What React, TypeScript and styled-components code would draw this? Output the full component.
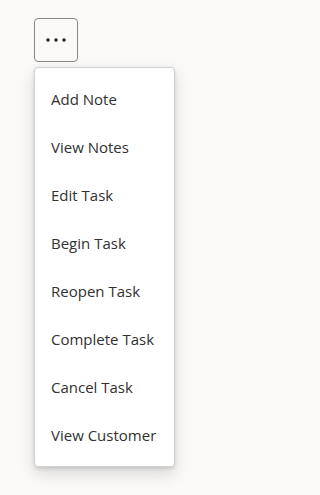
import styled, { createGlobalStyle } from 'styled-components';

const items = [
  'Add Note',
  'View Notes',
  'Edit Task',
  'Begin Task',
  'Reopen Task',
  'Complete Task',
  'Cancel Task',
  'View Customer',
];

const GlobalStyle = createGlobalStyle`
  html, body {
    margin: 0;
    background: #faf9f8;
  }
  body {
    font-family: "Open Sans", "Noto Sans", sans-serif;
    color: #323130;
  }
`;

function MoreIcon() {
  return (
    <svg width="20" height="6" viewBox="0 0 20 6" aria-hidden="true">
      <circle cx="2" cy="3" r="1.7" fill="#201f1e" />
      <circle cx="10" cy="3" r="1.7" fill="#201f1e" />
      <circle cx="18" cy="3" r="1.7" fill="#201f1e" />
    </svg>
  );
}

export default function App() {
  return (
    <>
      <GlobalStyle />
      <Page>
        <MenuAnchor>
          <MoreButton type="button" aria-label="More actions">
            <MoreIcon />
          </MoreButton>
          <Menu role="menu">
            {items.map((label) => (
              <MenuItem key={label} role="menuitem">
                {label}
              </MenuItem>
            ))}
          </Menu>
        </MenuAnchor>
      </Page>
    </>
  );
}

const Page = styled.div`
  min-height: 495px;
  padding: 18px 0 0 34px;
  box-sizing: border-box;
`;

const MenuAnchor = styled.div`
  position: relative;
  display: flex;
  flex-direction: column;
  align-items: flex-start;
  gap: 5px;
`;

const MoreButton = styled.button`
  display: flex;
  align-items: center;
  justify-content: center;
  width: 44px;
  height: 44px;
  padding: 0;
  background: transparent;
  border: 1px solid #8a8886;
  border-radius: 4px;
  cursor: pointer;
`;

const Menu = styled.ul`
  list-style: none;
  margin: 0;
  padding: 7px 0;
  width: 141px;
  box-sizing: border-box;
  background: #ffffff;
  border: 1px solid #d1d1d1;
  border-radius: 4px;
  box-shadow: 0 6.4px 14.4px rgba(0, 0, 0, 0.13), 0 1.2px 3.6px rgba(0, 0, 0, 0.11);
`;

const MenuItem = styled.li`
  display: flex;
  align-items: center;
  height: 48px;
  padding: 0 16px;
  font-size: 15px;
  color: #323130;
  white-space: nowrap;
  cursor: pointer;
`;
